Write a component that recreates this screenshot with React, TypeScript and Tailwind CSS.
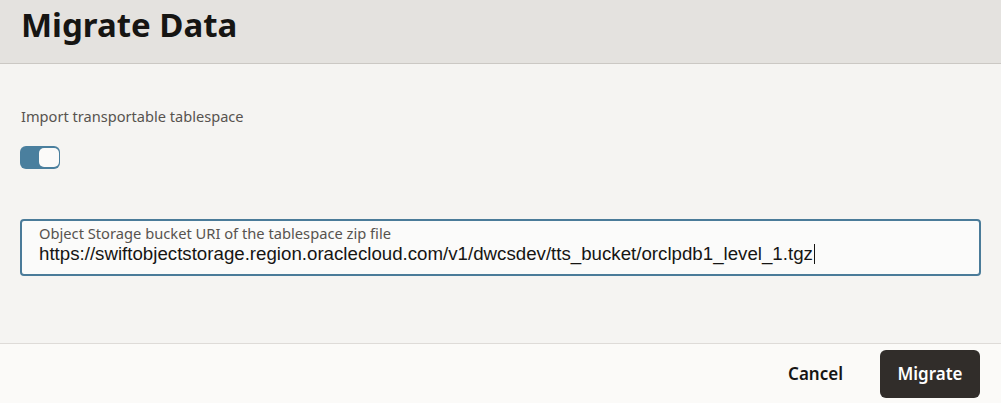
export default function App() {
  return (
    <div className="flex h-[403px] w-[1001px] flex-col overflow-hidden bg-[#f5f4f2] font-['Noto_Sans',sans-serif] text-[#161513]">
      <header className="flex h-[64px] shrink-0 items-start border-b border-[#cbc8c4] bg-[#e4e2df] px-[21px] pt-[3px]">
        <h1 className="text-[33px] font-bold leading-[44px]">Migrate Data</h1>
      </header>

      <main className="flex flex-1 flex-col px-[20px]">
        <div className="mt-[42px] pl-[1px] text-[14.6px] leading-[20px] text-[#57534f]">
          Import transportable tablespace
        </div>

        <button
          type="button"
          role="switch"
          aria-checked="true"
          className="mt-[20px] flex h-[23px] w-[40px] items-center justify-end rounded-[6px] bg-[#4a7f9e] pr-[1px]"
        >
          <span className="h-[19px] w-[20px] rounded-[5px] bg-[#fbfaf9]" />
        </button>

        <div className="mt-[50px] flex h-[57px] flex-col rounded-[4px] border-2 border-[#4a7b99] bg-[#fbfbfa] px-[17px] pt-[3px]">
          <label className="text-[14.7px] leading-[18px] text-[#57534f]">
            Object Storage bucket URI of the tablespace zip file
          </label>
          <div className="flex items-center font-['Liberation_Sans',sans-serif] text-[18.7px] leading-[24px] text-[#161513]">
            <span>https://swiftobjectstorage.region.oraclecloud.com/v1/dwcsdev/tts_bucket/orclpdb1_level_1.tgz</span>
            <span className="ml-[1px] h-[20px] w-px bg-[#161513]" />
          </div>
        </div>
      </main>

      <footer className="flex h-[60px] shrink-0 items-center justify-end gap-[37px] border-t border-[#dedbd8] bg-[#fbfaf8] pr-[21px]">
        <button type="button" className="text-[17px] font-semibold text-[#161513]">
          Cancel
        </button>
        <button
          type="button"
          className="h-[48px] w-[100px] rounded-[6px] bg-[#312d2a] text-[17px] font-semibold text-white"
        >
          Migrate
        </button>
      </footer>
    </div>
  );
}
